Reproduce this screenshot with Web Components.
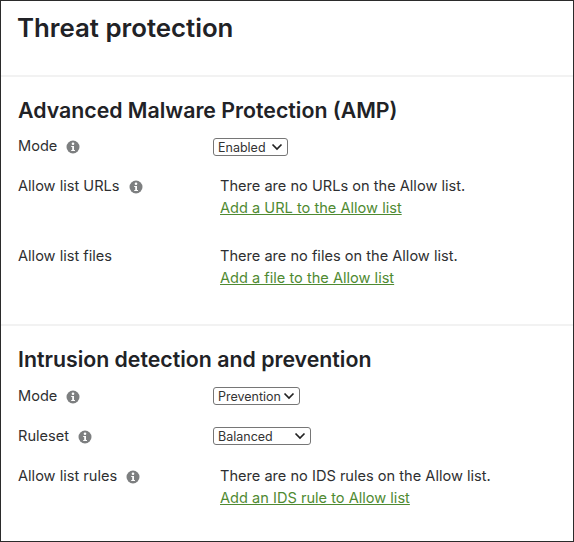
<!DOCTYPE html>
<html>
<head>
<meta charset="utf-8">
<title>Threat protection</title>
<style>
    html, body { margin: 0; height: 100%; background: #fff; }
    body { font-family: Inter, "Liberation Sans", sans-serif; color: #27282a; }
</style>
</head>
<body>
<threat-page>
    <h-section heading="Threat protection" level="1"></h-section>
    <h-section heading="Advanced Malware Protection (AMP)">
        <form-row label="Mode" info kind="select"><drop-down value="Enabled" width="75"></drop-down></form-row>
        <form-row label="Allow list URLs" info>
            <allow-note text="There are no URLs on the Allow list." link="Add a URL to the Allow list"></allow-note>
        </form-row>
        <form-row label="Allow list files">
            <allow-note text="There are no files on the Allow list." link="Add a file to the Allow list"></allow-note>
        </form-row>
    </h-section>
    <h-section heading="Intrusion detection and prevention" last>
        <form-row label="Mode" info kind="select"><drop-down value="Prevention" width="87"></drop-down></form-row>
        <form-row label="Ruleset" info kind="select"><drop-down value="Balanced" width="98"></drop-down></form-row>
        <form-row label="Allow list rules" info>
            <allow-note text="There are no IDS rules on the Allow list." link="Add an IDS rule to Allow list"></allow-note>
        </form-row>
    </h-section>
</threat-page>

<script>
/** Outer frame of the settings page */
class ThreatPage extends HTMLElement {
    constructor() {
        super();
        this.attachShadow({ mode: 'open' });
    }

    connectedCallback() {
        this.shadowRoot.innerHTML = `
            <style>
                :host {
                    display: block;
                    box-sizing: border-box;
                    height: 542px;
                    border: 1px solid #2b2b2b;
                    overflow: hidden;
                }
            </style>
            <slot></slot>
        `;
    }
}

/** Block with a heading, split from the next one by a thin line */
class HSection extends HTMLElement {
    constructor() {
        super();
        this.attachShadow({ mode: 'open' });
    }

    connectedCallback() {
        const top = this.getAttribute('level') === '1';
        const last = this.hasAttribute('last');
        this.shadowRoot.innerHTML = `
            <style>
                :host {
                    display: block;
                    box-sizing: border-box;
                    padding: ${top ? '10px' : '20px'} 17px 0;
                    height: ${top ? '76px' : last ? 'auto' : '249px'};
                    border-bottom: ${last ? '0' : '2px solid #f2f2f2'};
                    --select-offset: ${last ? '1px' : '2px'};
                }
                h1, h2 { margin: 0; color: #212226; font-weight: 600; }
                h1 { font-size: 25.8px; line-height: 34px; margin-left: -1px; }
                h2 { font-size: 21.3px; line-height: 27px; margin-bottom: ${last ? '13px' : '12px'}; }
            </style>
            ${top ? `<h1>${this.getAttribute('heading')}</h1>` : `<h2>${this.getAttribute('heading')}</h2>`}
            <slot></slot>
        `;
    }
}

/** Label on the left, control on the right */
class FormRow extends HTMLElement {
    constructor() {
        super();
        this.attachShadow({ mode: 'open' });
    }

    connectedCallback() {
        const info = this.hasAttribute('info') ? `
            <svg width="14" height="14" viewBox="0 0 14 14" aria-hidden="true">
                <circle cx="7" cy="7" r="6.5" fill="#7d7f80"/>
                <circle cx="7" cy="3.7" r="1.3" fill="#fff"/>
                <path d="M5.2 5.9H8V9.9H9V11H5.2V9.9H6.2V7H5.2Z" fill="#fff"/>
            </svg>` : '';
        const isSelect = this.getAttribute('kind') === 'select';
        this.shadowRoot.innerHTML = `
            <style>
                :host {
                    display: grid;
                    grid-template-columns: ${isSelect ? '195px' : '202px'} 1fr;
                    font-size: 14.6px;
                    line-height: 21px;
                    color: #2e2f31;
                    margin-bottom: ${isSelect ? '19px' : '27px'};
                }
                .label { display: flex; align-items: center; gap: 9px; height: 21px; }
                svg { flex: none; }
            </style>
            <div class="label"><span>${this.getAttribute('label')}</span>${info}</div>
            <div><slot></slot></div>
        `;
    }
}

/** Closed select box */
class DropDown extends HTMLElement {
    constructor() {
        super();
        this.attachShadow({ mode: 'open' });
    }

    connectedCallback() {
        this.shadowRoot.innerHTML = `
            <style>
                :host {
                    display: flex;
                    align-items: center;
                    justify-content: space-between;
                    box-sizing: border-box;
                    width: ${this.getAttribute('width')}px;
                    height: 18px;
                    margin-top: var(--select-offset, 2px);
                    padding: 0 4px 0 4px;
                    border: 1px solid #767676;
                    border-radius: 3px;
                    font-size: 12.5px;
                    color: #333;
                    background: #fff;
                }
            </style>
            <span>${this.getAttribute('value')}</span>
            <svg width="12" height="8" viewBox="0 0 12 8" aria-hidden="true">
                <path d="M1.5 1.5 6 6l4.5-4.5" fill="none" stroke="#222" stroke-width="1.7"/>
            </svg>
        `;
    }
}

/** Empty list message with its link */
class AllowNote extends HTMLElement {
    constructor() {
        super();
        this.attachShadow({ mode: 'open' });
    }

    connectedCallback() {
        this.shadowRoot.innerHTML = `
            <style>
                :host { display: block; }
                a { display: inline-block; margin-top: 1px; color: #4f8a32; text-decoration: underline; }
            </style>
            <div>${this.getAttribute('text')}</div>
            <a href="#">${this.getAttribute('link')}</a>
        `;
    }
}

customElements.define('threat-page', ThreatPage);
customElements.define('h-section', HSection);
customElements.define('form-row', FormRow);
customElements.define('drop-down', DropDown);
customElements.define('allow-note', AllowNote);
</script>
</body>
</html>
